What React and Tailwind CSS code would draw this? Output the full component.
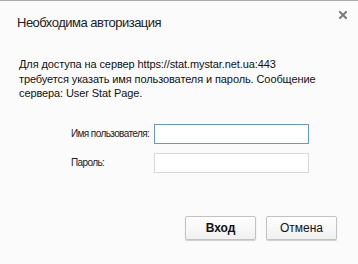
import React from 'react';

const font = { fontFamily: '"Liberation Sans", Arial, sans-serif' };

const CloseIcon = () => (
  <svg width="8" height="8" viewBox="0 0 8 8" className="block">
    <path d="M1 1 L7 7 M7 1 L1 7" stroke="#7a7a7a" strokeWidth="2" strokeLinecap="square" />
  </svg>
);

const Field = ({ label, focused }) => (
  <div className="flex items-center h-5">
    <label className="w-[83px] shrink-0 whitespace-nowrap text-[10px] tracking-[-0.6px] text-[#222]">{label}</label>
    <div
      className={
        focused
          ? 'w-[155px] h-5 bg-white border border-[#6b95d3]'
          : 'w-[155px] h-5 bg-white border border-[#d9d9d9]'
      }
    />
  </div>
);

const Button = ({ children, bold }) => (
  <button
    className={
      (bold ? 'font-bold ' : '') +
      'w-[71px] h-[24px] text-[12px] text-[#111] border border-[#c2c2c2] rounded-[2px] bg-gradient-to-b from-[#fefefe] to-[#f1f1f1] shadow-[0_1px_1px_rgba(0,0,0,0.18)]'
    }
  >
    {children}
  </button>
);

export default function App() {
  return (
    <div
      className="w-[358px] h-[264px] bg-[#fbfbfb] border-t border-[#a9a9a9] relative flex flex-col"
      style={font}
    >
      <button className="absolute right-[11px] top-[10px] p-0">
        <CloseIcon />
      </button>

      <h1 className="pl-[17px] pt-[14px] text-[13px] tracking-[-0.5px] leading-[16px] text-[#222] font-normal">
        Необходима авторизация
      </h1>

      <p className="pl-[19px] mt-[26px] text-[11px] tracking-[-0.1px] leading-[14.5px] text-[#111]">
        Для доступа на сервер https://stat.mystar.net.ua:443
        <br />
        требуется указать имя пользователя и пароль. Сообщение
        <br />
        сервера: User Stat Page.
      </p>

      <div className="pl-[71px] mt-[23px] flex flex-col gap-[9px]">
        <Field label="Имя пользователя:" focused />
        <Field label="Пароль:" />
      </div>

      <div className="mt-auto mb-[24px] pr-[21px] flex justify-end gap-[10px]">
        <Button bold>Вход</Button>
        <Button>Отмена</Button>
      </div>
    </div>
  );
}
